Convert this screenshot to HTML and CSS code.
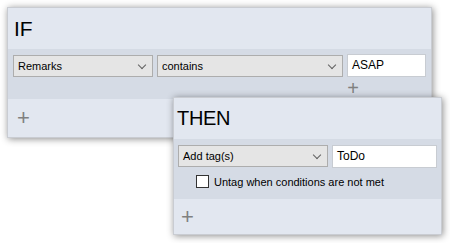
FILE: index.html
```html
<!DOCTYPE html>
<html lang="en">
	<head>
		<meta charset="UTF-8" />
		<title>Rule editor</title>
		<link rel="stylesheet" href="styles.css">
	</head>
	<body>
		<div class="desk">
			<div class="panel panel-if">
				<div class="panel-head">IF</div>
				<div class="panel-body">
					<div class="row">
						<div class="select sel-field">Remarks<span class="caret"></span></div>
						<div class="select sel-op">contains<span class="caret"></span></div>
						<div class="input in-value">ASAP</div>
					</div>
					<div class="add-cond">+</div>
				</div>
				<div class="panel-foot"><span class="plus">+</span></div>
			</div>

			<div class="panel panel-then">
				<div class="panel-head">THEN</div>
				<div class="panel-body">
					<div class="row">
						<div class="select sel-action">Add tag(s)<span class="caret"></span></div>
						<div class="input in-tag">ToDo</div>
					</div>
					<label class="check">
						<span class="box"></span>
						Untag when conditions are not met
					</label>
				</div>
				<div class="panel-foot"><span class="plus">+</span></div>
			</div>
		</div>
	</body>
</html>
```

FILE: styles.css
```css
body {
	margin: 0;
	background-color: #ffffff;
	font-family: "Liberation Sans", Arial, sans-serif;
	font-size: 11px;
	color: #000000;
}

.desk {
	position: relative;
	width: 450px;
	height: 243px;
	padding: 7px 0 0 7px;
	box-sizing: border-box;
}

.panel {
	background-color: #e2e7f0;
	border: 1px solid #c9ccd2;
	box-shadow: 1px 1px 7px rgba(0, 0, 0, 0.45);
	box-sizing: border-box;
}

.panel-if {
	width: 425px;
	height: 131px;
}

.panel-then {
	position: absolute;
	left: 173px;
	top: 97px;
	width: 269px;
	height: 138px;
}

.panel-head {
	height: 41px;
	padding-left: 6px;
	font-size: 21px;
	line-height: 41px;
}

.panel-then .panel-head {
	padding-left: 3px;
	font-size: 20px;
	letter-spacing: -0.3px;
}

.panel-body {
	background-color: #d5dbe5;
	height: 50px;
	padding: 6px 0 0 5px;
	box-sizing: border-box;
}

.panel-then .panel-body {
	height: 60px;
	padding: 6px 0 0 4px;
}

.row {
	display: flex;
	gap: 4px;
}

.select {
	position: relative;
	height: 22px;
	line-height: 20px;
	padding-left: 4px;
	background-color: #e5e5e5;
	border: 1px solid #adadad;
	box-sizing: border-box;
}

.caret {
	position: absolute;
	right: 7px;
	top: 6px;
	width: 5px;
	height: 5px;
	border-right: 1px solid #606060;
	border-bottom: 1px solid #606060;
	transform: rotate(45deg);
}

.input {
	height: 23px;
	line-height: 21px;
	padding-left: 4px;
	background-color: #ffffff;
	border: 1px solid #c8ccd2;
	box-sizing: border-box;
	font-size: 12px;
}

.sel-field {
	width: 140px;
}

.sel-op {
	width: 186px;
}

.in-value {
	width: 79px;
	margin-top: -1px;
}

.sel-action {
	width: 150px;
}

.in-tag {
	width: 105px;
}

.add-cond {
	margin: 3px 0 0 333px;
	width: 14px;
	color: #808080;
	font-size: 20px;
	line-height: 16px;
	text-align: center;
}

.check {
	display: flex;
	align-items: center;
	gap: 5px;
	margin: 7px 0 0 18px;
}

.box {
	width: 11px;
	height: 11px;
	background-color: #ffffff;
	border: 1px solid #333333;
}

.panel-foot {
	height: 38px;
	padding-left: 9px;
	display: flex;
	align-items: center;
}

.panel-then .panel-foot {
	height: 35px;
	padding-left: 7px;
}

.plus {
	color: #808080;
	font-size: 22px;
	line-height: 22px;
}
```
